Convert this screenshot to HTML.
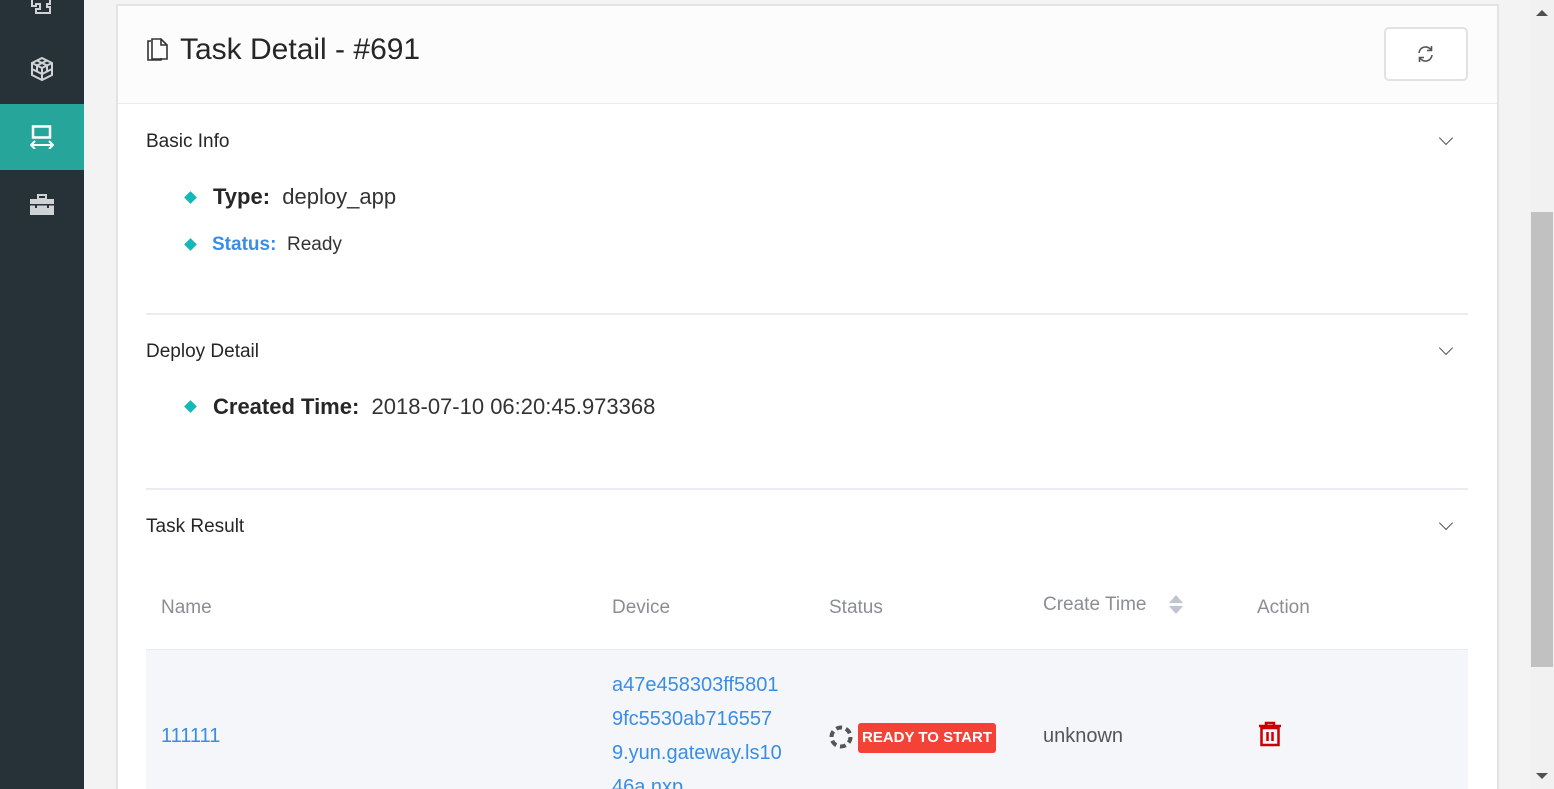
<!DOCTYPE html>
<html style="overflow:hidden;height:789px"><head><meta charset="utf-8"><style>
*{margin:0;padding:0;box-sizing:border-box}
body{width:1554px;height:789px;overflow:hidden;background:#f3f3f3;font-family:"Liberation Sans",sans-serif;position:relative;color:#262626}
.a{position:absolute;white-space:nowrap}
.side{left:0;top:0;width:84px;height:789px;background:#263238}
.card{left:116px;top:4px;width:1383px;height:785px;background:#fff;border:2px solid #e3e3e3;border-bottom:none}
.hdr{left:118px;top:6px;width:1379px;height:98px;background:#fcfcfd;border-bottom:1px solid #e8ebf0}
.sec{font-size:19px;color:#262626}
.hr{height:2px;background:#e9edf2;left:146px;width:1322px}
.dia{width:9px;height:9px;background:#14b8b8;transform:rotate(45deg)}
.th{font-size:19px;color:#8a8e94}
.lnk{color:#3a8de6}
.chev{width:10px;height:10px;border-right:1.5px solid #555;border-bottom:1.5px solid #555;transform:rotate(45deg)}
</style></head><body>
<div class="a side"></div>
<svg class="a" style="left:29px;top:0" width="26" height="16" viewBox="0 0 26 16"><path d="M3 0v6h4v-2h4v5h-4v4h14v-6h-3v-3h3V0" fill="none" stroke="#cfd3d6" stroke-width="2"/></svg>
<svg class="a" style="left:29px;top:56px" width="26" height="26" viewBox="0 0 26 26"><path d="M13 2l10 5v12l-10 5-10-5V7z M3 7l10 5 10-5 M13 12v12 M8 4.5l10 5v6 M18 4.5l-10 5v6 M3 13l10 5 10-5" fill="none" stroke="#cfd3d6" stroke-width="2"/></svg>
<div class="a" style="left:0;top:104px;width:84px;height:66px;background:#26a69a"></div>
<svg class="a" style="left:30px;top:125px" width="24" height="24" viewBox="0 0 24 24"><rect x="3" y="1.5" width="17" height="11" fill="none" stroke="#fff" stroke-width="2.5"/><path d="M1 20h22 M5 16l-4 4 4 4 M19 16l4 4-4 4" fill="none" stroke="#fff" stroke-width="2"/></svg>
<svg class="a" style="left:29px;top:194px" width="26" height="22" viewBox="0 0 26 22"><rect x="1" y="5" width="24" height="16" fill="#cfd3d6"/><rect x="9" y="1" width="8" height="4" fill="none" stroke="#cfd3d6" stroke-width="2"/><rect x="1" y="10" width="24" height="1.5" fill="#263238"/><rect x="6" y="10" width="2" height="4" fill="#263238"/><rect x="18" y="10" width="2" height="4" fill="#263238"/></svg>

<div class="a card"></div>
<div class="a hdr"></div>
<svg class="a" style="left:147px;top:38px" width="22" height="24" viewBox="0 0 22 24"><path d="M4 3H1v19h13v-2" fill="none" stroke="#333" stroke-width="1.6"/><path d="M5 1h9l6 6v14H5z M14 1v6h6" fill="none" stroke="#333" stroke-width="1.6"/></svg>
<div class="a" style="left:180px;top:33px;font-size:30px;color:#262626">Task Detail - #691</div>
<div class="a" style="left:1384px;top:27px;width:84px;height:54px;border:2px solid #dfe2e7;border-radius:5px;background:#fff"></div>
<svg class="a" style="left:1416px;top:45px" width="19" height="18" viewBox="0 0 19 18"><path d="M3 8a6.5 6.5 0 0 1 12-3 M16 10a6.5 6.5 0 0 1-12 3" fill="none" stroke="#555" stroke-width="1.6"/><path d="M15.5 1v4.5h-4.5 M3.5 17v-4.5h4.5" fill="none" stroke="#555" stroke-width="1.6"/></svg>

<div class="a sec" style="left:146px;top:131px">Basic Info</div>
<div class="a chev" style="left:1441px;top:133px"></div>
<div class="a dia" style="left:186px;top:193px"></div>
<div class="a" style="left:213px;top:184px;font-size:22px"><b>Type:</b>&nbsp;&nbsp;<span style="color:#333">deploy_app</span></div>
<div class="a dia" style="left:186px;top:240px"></div>
<div class="a" style="left:212px;top:234px;font-size:19px"><b style="color:#3a8de6">Status:</b>&nbsp;&nbsp;<span style="color:#333">Ready</span></div>
<div class="a hr" style="top:313px"></div>

<div class="a sec" style="left:146px;top:341px">Deploy Detail</div>
<div class="a chev" style="left:1441px;top:343px"></div>
<div class="a dia" style="left:186px;top:402px"></div>
<div class="a" style="left:213px;top:394px;font-size:22px"><b>Created Time:</b>&nbsp;&nbsp;<span style="color:#333">2018-07-10 06:20:45.973368</span></div>
<div class="a hr" style="top:488px"></div>

<div class="a sec" style="left:146px;top:516px">Task Result</div>
<div class="a chev" style="left:1441px;top:518px"></div>

<div class="a th" style="left:161px;top:597px">Name</div>
<div class="a th" style="left:612px;top:597px">Device</div>
<div class="a th" style="left:829px;top:597px">Status</div>
<div class="a th" style="left:1043px;top:594px">Create Time</div>
<svg class="a" style="left:1168px;top:595px" width="16" height="20" viewBox="0 0 16 20"><path d="M1 8L8 0l7 8z M1 11l7 8 7-8z" fill="#c0c4cc"/></svg>
<div class="a th" style="left:1257px;top:597px">Action</div>

<div class="a" style="left:146px;top:649px;width:1322px;height:140px;background:#f4f6fa;border-top:1px solid #e8ebf0"></div>
<div class="a lnk" style="left:161px;top:725px;font-size:20px">111111</div>
<div class="a lnk" style="left:612px;top:668px;font-size:20px;line-height:34px">a47e458303ff5801<br>9fc5530ab716557<br>9.yun.gateway.ls10<br>46a.nxp</div>
<svg class="a" style="left:828px;top:724px" width="26" height="26" viewBox="0 0 26 26"><circle cx="13" cy="13" r="9.5" fill="none" stroke="#555" stroke-width="4" stroke-dasharray="6 3.9"/></svg>
<div class="a" style="left:858px;top:723px;width:138px;height:30px;background:#f44336;border-radius:3px;color:#fff;font-size:15px;font-weight:bold;line-height:30px;text-align:center">READY TO START</div>
<div class="a" style="left:1043px;top:725px;font-size:20px;color:#555">unknown</div>
<svg class="a" style="left:1258px;top:721px" width="24" height="26" viewBox="0 0 24 26"><path d="M1 5h22 M8 5V2h8v3" fill="none" stroke="#c00" stroke-width="2.5"/><rect x="3.5" y="7" width="17" height="17" fill="none" stroke="#c00" stroke-width="2.5"/><path d="M9.5 11v9 M14.5 11v9" stroke="#c00" stroke-width="2.5"/></svg>

<div class="a" style="left:1530px;top:0;width:24px;height:789px;background:#f1f1f1"></div>
<div class="a" style="left:1531px;top:212px;width:22px;height:455px;background:#c1c1c1"></div>
<svg class="a" style="left:1536px;top:9px" width="12" height="8"><path d="M0 7L6 1l6 6z" fill="#505050"/></svg>
<svg class="a" style="left:1536px;top:772px" width="12" height="8"><path d="M0 1h12L6 7z" fill="#505050"/></svg>
</body></html>
